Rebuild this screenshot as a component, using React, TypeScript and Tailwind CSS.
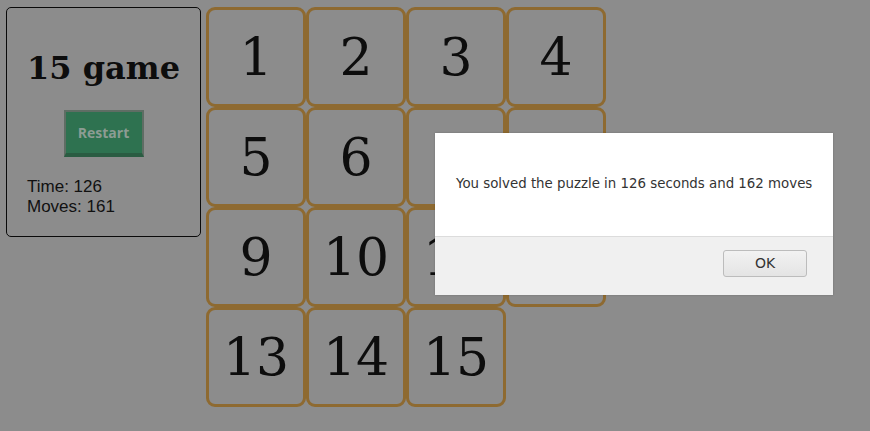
const tiles: (number | null)[] = [1, 2, 3, 4, 5, 6, 7, 8, 9, 10, 11, 12, 13, 14, 15, null];

export default function App() {
  return (
    <div className="relative h-[431px] w-[870px] overflow-hidden bg-[#8c8c8c]">
      <div className="flex items-start gap-[5px] pl-[6px] pt-[7px]">
        <section className="flex h-[230px] w-[195px] flex-col rounded-[5px] border border-[#0a0a0a] pt-[42px]">
          <h1
            className="text-center text-[32px] font-bold leading-[37px] text-[#0d0d0d]"
            style={{ fontFamily: '"DejaVu Serif", serif' }}
          >
            15 game
          </h1>
          <button
            type="button"
            className="mx-auto mt-[23px] h-[47px] w-[80px] border-2 border-b-4 border-[#5f6d64] border-b-[#2a5c42] bg-[#2e7250] text-[14px] font-bold text-[#8c9c93]"
            style={{ fontFamily: '"Open Sans", sans-serif' }}
          >
            Restart
          </button>
          <div
            className="mt-[20px] pl-[20px] text-[17px] leading-[20px] text-[#111]"
            style={{ fontFamily: '"Liberation Sans", Arial, sans-serif' }}
          >
            <p>Time: 126</p>
            <p>Moves: 161</p>
          </div>
        </section>

        <div className="grid grid-cols-[repeat(4,100px)] grid-rows-[repeat(4,100px)]">
          {tiles.map((n, i) =>
            n === null ? (
              <div key={i} />
            ) : (
              <div
                key={i}
                className="flex items-center justify-center rounded-[9px] border-[3px] border-[#8e6a31] text-[52px] text-[#0d0d0d]"
                style={{ fontFamily: '"DejaVu Serif", serif' }}
              >
                {n}
              </div>
            ),
          )}
        </div>
      </div>

      <div
        className="absolute left-[435px] top-[133px] flex h-[162px] w-[398px] flex-col bg-white shadow-[0_0_2px_rgba(0,0,0,0.2)]"
        style={{ fontFamily: '"DejaVu Sans", sans-serif' }}
      >
        <div className="flex h-[103px] items-center whitespace-nowrap pl-[21px] text-[13.35px] text-[#333]">
          You solved the puzzle in 126 seconds and 162 moves
        </div>
        <div className="flex flex-1 items-start justify-end border-t border-[#dcdcdc] bg-[#f0f0f0] pr-[26px] pt-[13px]">
          <button
            type="button"
            className="h-[27px] w-[84px] rounded-[3px] border border-[#bcbcbc] bg-gradient-to-b from-[#f2f2f2] to-[#e4e4e4] text-[14px] text-[#333]"
          >
            OK
          </button>
        </div>
      </div>
    </div>
  );
}
